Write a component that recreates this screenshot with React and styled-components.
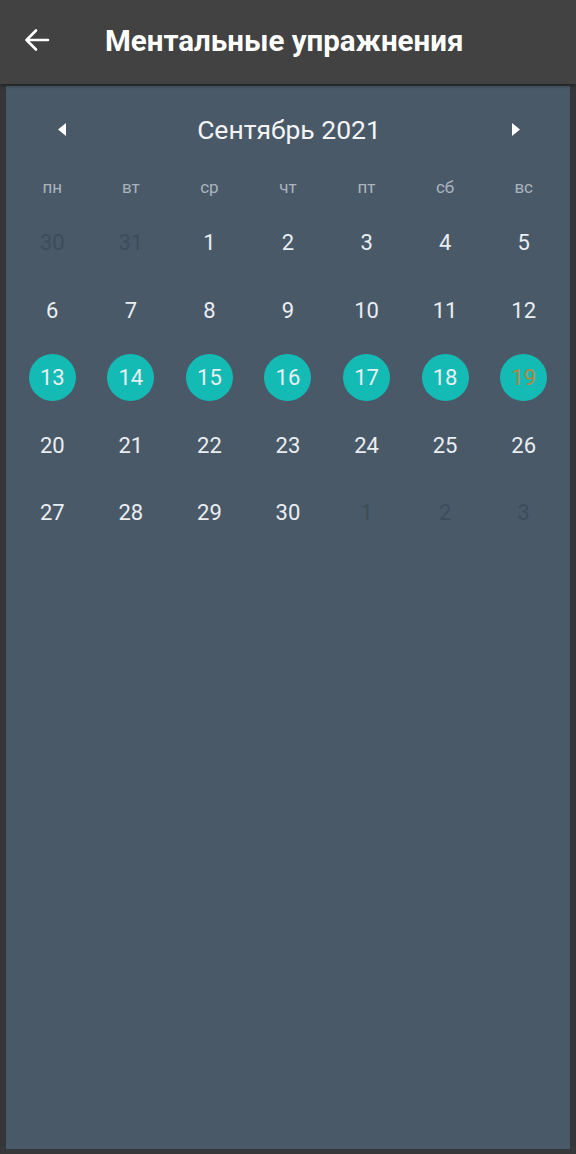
import React from "react";
import styled, { createGlobalStyle } from "styled-components";

const GlobalStyle = createGlobalStyle`
  html, body {
    margin: 0;
    padding: 0;
    background: #3a3a3a;
    font-family: Roboto, "Noto Sans", sans-serif;
  }
`;

const Screen = styled.div`
  width: 576px;
  height: 1154px;
  display: flex;
  flex-direction: column;
  background: #363738;
`;

const TopBar = styled.header`
  height: 84px;
  flex-shrink: 0;
  display: flex;
  align-items: center;
  background: #424242;
  box-shadow: 0 2px 3px rgba(0, 0, 0, 0.35);
  z-index: 1;
`;

const BackButton = styled.button`
  width: 76px;
  height: 84px;
  padding: 0 0 4px 24px;
  display: flex;
  align-items: center;
  background: none;
  border: none;
  color: #fff;
`;

const Title = styled.h1`
  margin: 0 0 2px 29px;
  font-size: 29.5px;
  font-weight: 700;
  color: #fff;
  letter-spacing: 0;
`;

const Panel = styled.main`
  flex: 1;
  margin: 2px 6px 5px;
  padding: 0 7px;
  background: #4a5968;
`;

const MonthRow = styled.div`
  height: 86px;
  display: flex;
  align-items: center;
  justify-content: space-between;
  padding: 0 41px 0 43px;
`;

const NavArrow = styled.button`
  width: 12px;
  height: 14px;
  padding: 0;
  background: none;
  border: none;
  display: flex;
  align-items: center;
  justify-content: center;
`;

const MonthTitle = styled.div`
  font-size: 26.5px;
  color: #f2f4f6;
`;

const Grid = styled.div`
  display: grid;
  grid-template-columns: repeat(7, 1fr);
`;

const WeekDay = styled.div`
  height: 30px;
  display: flex;
  align-items: center;
  justify-content: center;
  font-size: 17px;
  color: #aab4be;
  margin-bottom: 7px;
`;

const DayCell = styled.div`
  height: 67.5px;
  display: flex;
  align-items: center;
  justify-content: center;
`;

const Day = styled.div`
  width: 47px;
  height: 47px;
  border-radius: 50%;
  display: flex;
  align-items: center;
  justify-content: center;
  font-size: 22px;
  background: ${(p) => (p.$selected ? "#14bbb5" : "transparent")};
  color: ${(p) =>
    p.$today ? "#b8873e" : p.$muted ? "#3e4c5a" : "#e9eef2"};
`;

const weekDays = ["пн", "вт", "ср", "чт", "пт", "сб", "вс"];

const days = [
  ...[30, 31].map((d) => ({ d, muted: true })),
  ...Array.from({ length: 30 }, (_, i) => ({
    d: i + 1,
    selected: i + 1 >= 13 && i + 1 <= 19,
    today: i + 1 === 19,
  })),
  ...[1, 2, 3].map((d) => ({ d, muted: true })),
];

const Triangle = ({ dir }) => (
  <svg width="8" height="13" viewBox="0 0 8 13">
    {dir === "left" ? (
      <polygon points="8,0 8,13 0,6.5" fill="#fff" />
    ) : (
      <polygon points="0,0 0,13 8,6.5" fill="#fff" />
    )}
  </svg>
);

const App = () => (
  <>
    <GlobalStyle />
    <Screen>
      <TopBar>
        <BackButton aria-label="Назад">
          <svg width="26" height="24" viewBox="0 0 26 24" fill="none">
            <path
              d="M24 12H3M12 2.5L2.5 12L12 21.5"
              stroke="#fff"
              strokeWidth="2.6"
              strokeLinecap="round"
              strokeLinejoin="round"
            />
          </svg>
        </BackButton>
        <Title>Ментальные упражнения</Title>
      </TopBar>
      <Panel>
        <MonthRow>
          <NavArrow aria-label="Предыдущий месяц">
            <Triangle dir="left" />
          </NavArrow>
          <MonthTitle>Сентябрь 2021</MonthTitle>
          <NavArrow aria-label="Следующий месяц">
            <Triangle dir="right" />
          </NavArrow>
        </MonthRow>
        <Grid>
          {weekDays.map((w) => (
            <WeekDay key={w}>{w}</WeekDay>
          ))}
          {days.map((item, i) => (
            <DayCell key={i}>
              <Day
                $muted={item.muted}
                $selected={item.selected}
                $today={item.today}
              >
                {item.d}
              </Day>
            </DayCell>
          ))}
        </Grid>
      </Panel>
    </Screen>
  </>
);

export default App;
